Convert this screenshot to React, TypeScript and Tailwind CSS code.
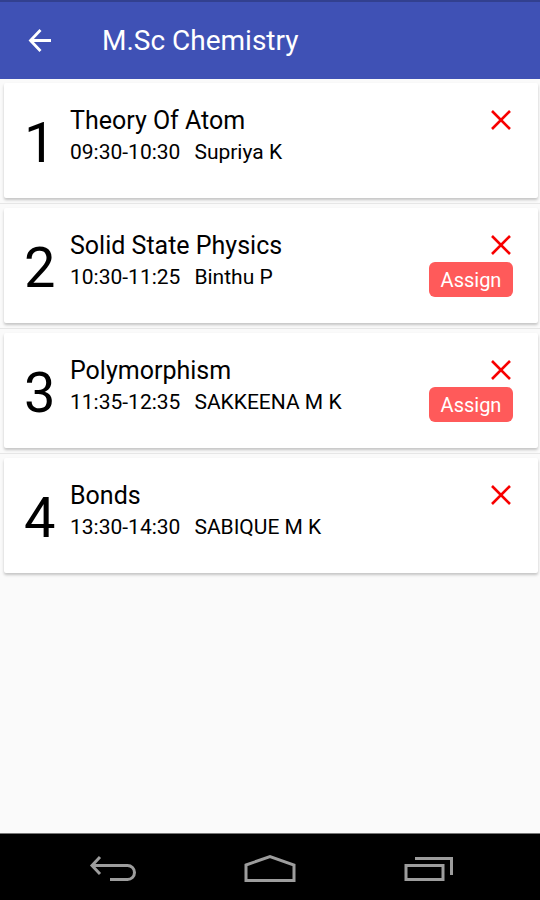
import clsx from "clsx";

interface Period {
  id: number;
  subject: string;
  time: string;
  teacher: string;
  assignable?: boolean;
}

const periods: Period[] = [
  { id: 1, subject: "Theory Of Atom", time: "09:30-10:30", teacher: "Supriya K" },
  { id: 2, subject: "Solid State Physics", time: "10:30-11:25", teacher: "Binthu P", assignable: true },
  { id: 3, subject: "Polymorphism", time: "11:35-12:35", teacher: "SAKKEENA M K", assignable: true },
  { id: 4, subject: "Bonds", time: "13:30-14:30", teacher: "SABIQUE M K" },
];

function Header() {
  return (
    <header className="flex h-[79px] items-center gap-[50px] border-t-2 border-[#32408f] bg-[#3f51b5] pl-7 text-white">
      <button type="button" aria-label="Back">
        <svg className="block h-6 w-6" viewBox="0 0 24 24" fill="none" stroke="currentColor" strokeWidth="2.8">
          <path d="M23 11.5H3M12.5 1L2.5 11.5L12.5 22" />
        </svg>
      </button>
      <h1 className="text-[28px] leading-8">M.Sc Chemistry</h1>
    </header>
  );
}

function PeriodCard({ period, last }: { period: Period; last: boolean }) {
  return (
    <li className={clsx("pt-1 pr-0.5 pl-1", !last && "border-b border-[#e6e6e6] pb-[5px]")}>
      <div className="flex h-[115px] rounded-xs bg-white pr-[25px] shadow-[0_2px_3px_rgba(0,0,0,0.22)]">
        <div className="w-[66px] pt-7 pl-5 text-[56px] leading-16">{period.id}</div>
        <div className="flex-1 pt-[22px]">
          <h2 className="text-[25px] leading-8">{period.subject}</h2>
          <p className="flex gap-3.5 text-[21px] leading-[30px]">
            <span>{period.time}</span>
            <span>{period.teacher}</span>
          </p>
        </div>
        <div className="flex flex-col items-end gap-[7px] pt-[27px]">
          <button type="button" aria-label={`Remove ${period.subject}`} className="pr-0.5 text-[#f80000]">
            <svg className="block h-5 w-5" viewBox="0 0 20 20" fill="none" stroke="currentColor" strokeWidth="2.6">
              <path d="M1 1L19 19M19 1L1 19" />
            </svg>
          </button>
          {period.assignable && (
            <button type="button" className="h-[35px] w-[84px] rounded-md bg-[#ff5a5a] text-[20px] text-white">
              Assign
            </button>
          )}
        </div>
      </div>
    </li>
  );
}

function NavigationBar() {
  return (
    <nav className="grid h-[67px] grid-cols-3 items-center justify-items-center border-t border-[#777777] bg-black px-[34px] pt-1 text-[#9d9d9d]">
      <button type="button" aria-label="Back">
        <svg className="block h-7 w-12" viewBox="0 0 48 28" fill="none" stroke="currentColor" strokeWidth="3">
          <path d="M3 10.5H38.5A7 7 0 0 1 38.5 24.5H21M11 2L3 10.5L11 19" />
        </svg>
      </button>
      <button type="button" aria-label="Home">
        <svg className="block h-7 w-13" viewBox="0 0 52 28" fill="none" stroke="currentColor" strokeWidth="3">
          <path d="M2 10L26 1.6L50 10V25.5H2Z" />
        </svg>
      </button>
      <button type="button" aria-label="Recent apps">
        <svg className="block h-7 w-13" viewBox="0 0 52 28" fill="none" stroke="currentColor" strokeWidth="3">
          <path d="M5 10.5H42V24.5H5ZM14 3.5H50.5V20" />
        </svg>
      </button>
    </nav>
  );
}

export default function App() {
  return (
    <div className="flex min-h-screen flex-col bg-[#fafafa] font-['Roboto',sans-serif] text-black">
      <Header />
      <main className="flex-1">
        <ul>
          {periods.map((period, index) => (
            <PeriodCard key={period.id} period={period} last={index === periods.length - 1} />
          ))}
        </ul>
      </main>
      <NavigationBar />
    </div>
  );
}
